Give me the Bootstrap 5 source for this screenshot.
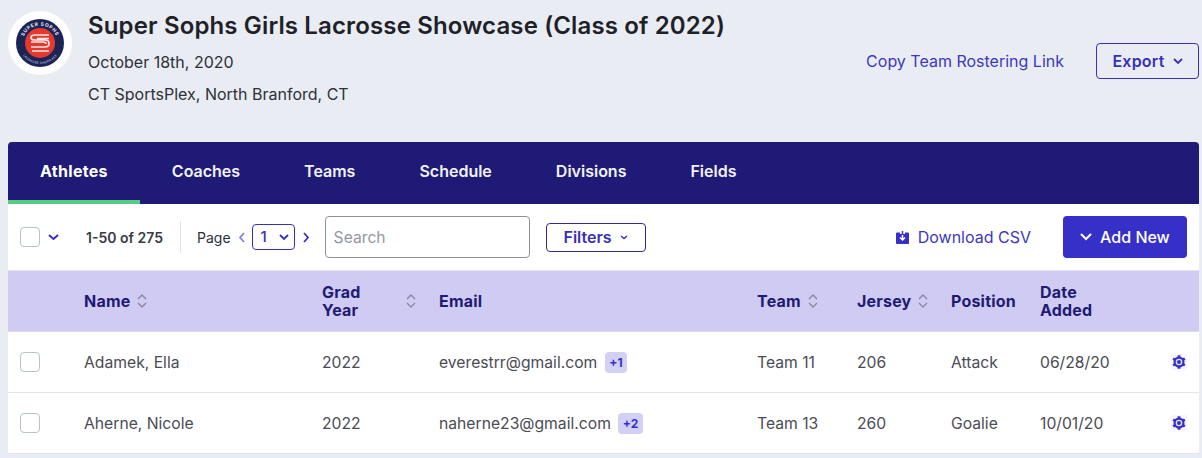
<!DOCTYPE html>
<html lang="en"><head><meta charset="utf-8"><title>Super Sophs</title>
<link href="https://cdn.jsdelivr.net/npm/bootstrap@5.3.0/dist/css/bootstrap.min.css" rel="stylesheet">
<style>
html,body{height:458px;overflow:hidden}
body{background:#e9edf3;font-family:Inter,"Liberation Sans",sans-serif;color:#33343c;font-size:16px}
.page-head{height:142px;padding:11px 3px 0 8px}
.logo-disc{width:64px;height:64px;flex:none}
.head-info{margin-left:16px}
.event-title{font-size:24px;font-weight:600;letter-spacing:.14px;color:#1f2129;line-height:29px;margin:0 0 11px}
.event-line{font-size:16px;line-height:22px;margin-bottom:10px;color:#2e3038}
.head-actions{margin-top:32px;gap:32px}
.txt-link{color:#3d37bf;font-size:16px;text-decoration:none}
.btn-export{width:103px;height:36px;border:1px solid #3730b8;border-radius:4px;color:#3730b8;font-weight:600;font-size:16px;letter-spacing:.2px;padding:0;background:transparent}
.panel{margin:0 3px 0 8px;background:#fff;border-radius:4px 4px 0 0;overflow:hidden}
.tabbar{background:#1f1a75;height:62px;padding:0;flex-wrap:nowrap}
.tabbar .nav-link{color:#f2f2fa;font-weight:600;font-size:16px;padding:0 32px;height:62px;line-height:59px;border-bottom:4px solid transparent;border-radius:0}
.tabbar .nav-link.active{color:#fff;background:transparent;border-bottom-color:#57cc85;font-weight:700;letter-spacing:.3px}
.toolbar{height:67px;padding:0 12px;border-bottom:1px solid #e4e5ee}
.chk{width:20px;height:20px;border:1px solid #b5c3cb;border-radius:4px;background:#fff;flex:none;display:block}
.mini-chev{color:#3730c8;flex:none}
.count-text{font-size:14px;font-weight:600;color:#3a3b45;margin-left:27px;width:94px;white-space:nowrap}
.tool-sep{width:1px;height:32px;background:#e2e3e8;margin-right:16px}
.page-text{font-size:14px;color:#2e3038;margin-right:7px}
.page-select{width:43px;height:26px;border:1px solid #3730b8;border-radius:4px;color:#3730b8;font-size:15px;font-weight:500;padding:0 5px 0 8px;margin:0 8px 0 7px}
.search-box{width:205px;height:42px;margin-left:15px;border:1px solid #8f9096;border-radius:4px;color:#9597a0;font-size:15.7px;padding:0 8px;line-height:42px}
.btn-filter{width:100px;height:29px;margin-left:16px;border:1px solid #2f2a96;border-radius:4px;color:#3730b8;font-weight:600;font-size:16px;padding:0;background:#fff}
.btn-add{width:124px;height:42px;background:#3730c8;border:0;border-radius:4px;color:#fff;font-weight:500;font-size:16px;padding:0;margin-left:32px}
.data-table{table-layout:fixed;width:100%;margin:0;--bs-table-bg:transparent}
.data-table th{background:#cfcbf2;color:#1f1a75;font-weight:700;font-size:16px;letter-spacing:.2px;line-height:18px;height:60px;padding:0;vertical-align:middle;border-bottom:1px solid #dcdcec}
.data-table td{height:61px;padding:2px 0 0;vertical-align:middle;font-size:15.7px;color:#4a4b55;border-bottom:1px solid #e4e5ee}
.data-table td.c-chk{padding:0 0 0 12px}
.data-table td.c-gear{padding:0}
.c-chk{width:76px;padding-left:12px!important}
.c-name{width:238px}.c-grad{width:117px}.c-mail{width:318px}.c-team{width:100px}.c-jer{width:94px}.c-pos{width:89px}.c-date{width:131px}
.sort-ico{margin-left:7px;vertical-align:-2px}
.grad-wrap{width:94px}
.plus-tag{display:inline-block;background:#d3d0f5;color:#3730c8;font-size:12px;font-weight:700;line-height:15px;padding:3px 4.500px;border-radius:4px;margin-left:3px;vertical-align:1px}
</style></head>
<body>
<header class="page-head d-flex">
  <svg class="logo-disc" viewBox="0 0 64 64" role="img" aria-label="Super Sophs logo">
    <circle cx="32" cy="32" r="32" fill="#fff"/><circle cx="32" cy="32" r="24" fill="#1c2456"/>
    <circle cx="32" cy="32" r="15" fill="#e5392f"/>
    <defs><path id="arcTop" d="M14.500 32a17.500 17.500 0 0 1 35 0"/><path id="arcLow" d="M11 32a21 21 0 0 0 42 0"/></defs>
    <text font-family="Inter,sans-serif" font-size="4.800" font-weight="700" fill="#e9ecf3" letter-spacing=".7"><textPath href="#arcTop" startOffset="50%" text-anchor="middle">SUPER SOPHS</textPath></text>
    <text font-family="Inter,sans-serif" font-size="3" fill="#d9dcec" letter-spacing=".3"><textPath href="#arcLow" startOffset="50%" text-anchor="middle">LACROSSE SHOWCASE</textPath></text>
    <path d="M41 24H27q-4 0-4 2.500t4 2.500h10q4 0 4 3.500t-4 3.500H23M41 27.500H29M23 31h12q3 0 3 2M41 40H24" fill="none" stroke="#f4e9e6" stroke-width="1.700"/>
  </svg>
  <div class="head-info flex-grow-1">
    <h1 class="event-title">Super Sophs Girls Lacrosse Showcase (Class of 2022)</h1>
    <div class="event-line">October 18th, 2020</div>
    <div class="event-line">CT SportsPlex, North Branford, CT</div>
  </div>
  <div class="head-actions d-flex align-items-center align-self-start">
    <a class="txt-link" href="#">Copy Team Rostering Link</a>
    <button class="btn-export d-flex align-items-center justify-content-center gap-2" type="button">Export
      <svg width="10" height="7" viewBox="0 0 10 7"><path d="M1 1l4 4 4-4" fill="none" stroke="currentColor" stroke-width="1.800"/></svg></button>
  </div>
</header>
<main class="panel">
  <ul class="nav tabbar">
    <li class="nav-item"><a class="nav-link active" href="#">Athletes</a></li>
    <li class="nav-item"><a class="nav-link" href="#">Coaches</a></li>
    <li class="nav-item"><a class="nav-link" href="#">Teams</a></li>
    <li class="nav-item"><a class="nav-link" href="#">Schedule</a></li>
    <li class="nav-item"><a class="nav-link" href="#">Divisions</a></li>
    <li class="nav-item"><a class="nav-link" href="#">Fields</a></li>
  </ul>
  <div class="toolbar d-flex align-items-center">
    <span class="chk"></span>
    <svg class="mini-chev ms-2" width="11" height="7" viewBox="0 0 11 7"><path d="M1 1l4.500 4L10 1" fill="none" stroke="currentColor" stroke-width="2"/></svg>
    <span class="count-text">1-50 of 275</span>
    <span class="tool-sep"></span>
    <span class="page-text">Page</span>
    <svg width="7" height="11" viewBox="0 0 7 11"><path d="M6 1L2 5.500 6 10" fill="none" stroke="#7e79d8" stroke-width="1.600"/></svg>
    <span class="page-select d-flex align-items-center justify-content-between">1
      <svg width="10" height="7" viewBox="0 0 10 7"><path d="M1 1l4 4 4-4" fill="none" stroke="currentColor" stroke-width="1.800"/></svg></span>
    <svg width="7" height="11" viewBox="0 0 7 11"><path d="M1 1l4 4.500L1 10" fill="none" stroke="#3730c8" stroke-width="1.800"/></svg>
    <div class="search-box">Search</div>
    <button class="btn-filter d-flex align-items-center justify-content-center gap-2" type="button">Filters
      <svg width="8" height="5" viewBox="0 0 8 5"><path d="M1 1l3 2.500L7 1" fill="none" stroke="currentColor" stroke-width="1.400"/></svg></button>
    <a class="txt-link d-flex align-items-center gap-2 ms-auto" href="#">
      <svg width="15" height="15" viewBox="0 0 15 15"><path d="M1 3.500q0-1 1-1h3v1.500h5V2.500h3q1 0 1 1V13q0 1-1 1H2q-1 0-1-1z" fill="#3730c8"/><path d="M7.500 1v8" fill="none" stroke="#3730c8" stroke-width="1.500"/><path d="M7.500 5v4.500M5 7.500l2.500 2.500L10 7.500" fill="none" stroke="#fff" stroke-width="1.500"/></svg>
      <span>Download CSV</span></a>
    <button class="btn-add d-flex align-items-center justify-content-center gap-2" type="button">
      <svg width="12" height="8" viewBox="0 0 12 8"><path d="M1 1l5 5 5-5" fill="none" stroke="currentColor" stroke-width="2"/></svg>Add New</button>
  </div>
  <table class="table data-table">
    <thead><tr>
      <th class="c-chk"></th>
      <th class="c-name">Name<svg class="sort-ico" width="10" height="16" viewBox="0 0 10 16"><path d="M1 6l4-4 4 4M1 10l4 4 4-4" fill="none" stroke="#8d8ba3" stroke-width="1.500"/></svg></th>
      <th class="c-grad"><div class="grad-wrap d-flex align-items-center justify-content-between"><span>Grad<br>Year</span><svg width="10" height="16" viewBox="0 0 10 16"><path d="M1 6l4-4 4 4M1 10l4 4 4-4" fill="none" stroke="#8d8ba3" stroke-width="1.500"/></svg></div></th>
      <th class="c-mail">Email</th>
      <th class="c-team">Team<svg class="sort-ico" width="10" height="16" viewBox="0 0 10 16"><path d="M1 6l4-4 4 4M1 10l4 4 4-4" fill="none" stroke="#8d8ba3" stroke-width="1.500"/></svg></th>
      <th class="c-jer">Jersey<svg class="sort-ico" width="10" height="16" viewBox="0 0 10 16"><path d="M1 6l4-4 4 4M1 10l4 4 4-4" fill="none" stroke="#8d8ba3" stroke-width="1.500"/></svg></th>
      <th class="c-pos">Position</th>
      <th class="c-date">Date<br>Added</th>
      <th></th>
    </tr></thead>
    <tbody>
      <tr><td class="c-chk"><span class="chk"></span></td><td>Adamek, Ella</td><td>2022</td><td>everestrr@gmail.com <span class="plus-tag">+1</span></td><td>Team 11</td><td>206</td><td>Attack</td><td>06/28/20</td><td class="c-gear"><svg width="16" height="16" viewBox="0 0 16 16"><rect width="16" height="16" rx="2" fill="#f5f5fb"/><path d="M8 1.300v13.400M2.200 4.650l11.600 6.700M2.200 11.350l11.600-6.700" stroke="#3730c8" stroke-width="2.800"/><circle cx="8" cy="8" r="5.500" fill="#3730c8"/><circle cx="8" cy="8" r="3.300" fill="#e4e3f8"/><circle cx="8" cy="8" r="2" fill="#3730c8"/></svg></td></tr>
      <tr><td class="c-chk"><span class="chk"></span></td><td>Aherne, Nicole</td><td>2022</td><td>naherne23@gmail.com <span class="plus-tag">+2</span></td><td>Team 13</td><td>260</td><td>Goalie</td><td>10/01/20</td><td class="c-gear"><svg width="16" height="16" viewBox="0 0 16 16"><rect width="16" height="16" rx="2" fill="#f5f5fb"/><path d="M8 1.300v13.400M2.200 4.650l11.600 6.700M2.200 11.350l11.600-6.700" stroke="#3730c8" stroke-width="2.800"/><circle cx="8" cy="8" r="5.500" fill="#3730c8"/><circle cx="8" cy="8" r="3.300" fill="#e4e3f8"/><circle cx="8" cy="8" r="2" fill="#3730c8"/></svg></td></tr>
    </tbody>
  </table>
</main>
<script src="https://cdn.jsdelivr.net/npm/bootstrap@5.3.0/dist/js/bootstrap.bundle.min.js"></script>
</body></html>
